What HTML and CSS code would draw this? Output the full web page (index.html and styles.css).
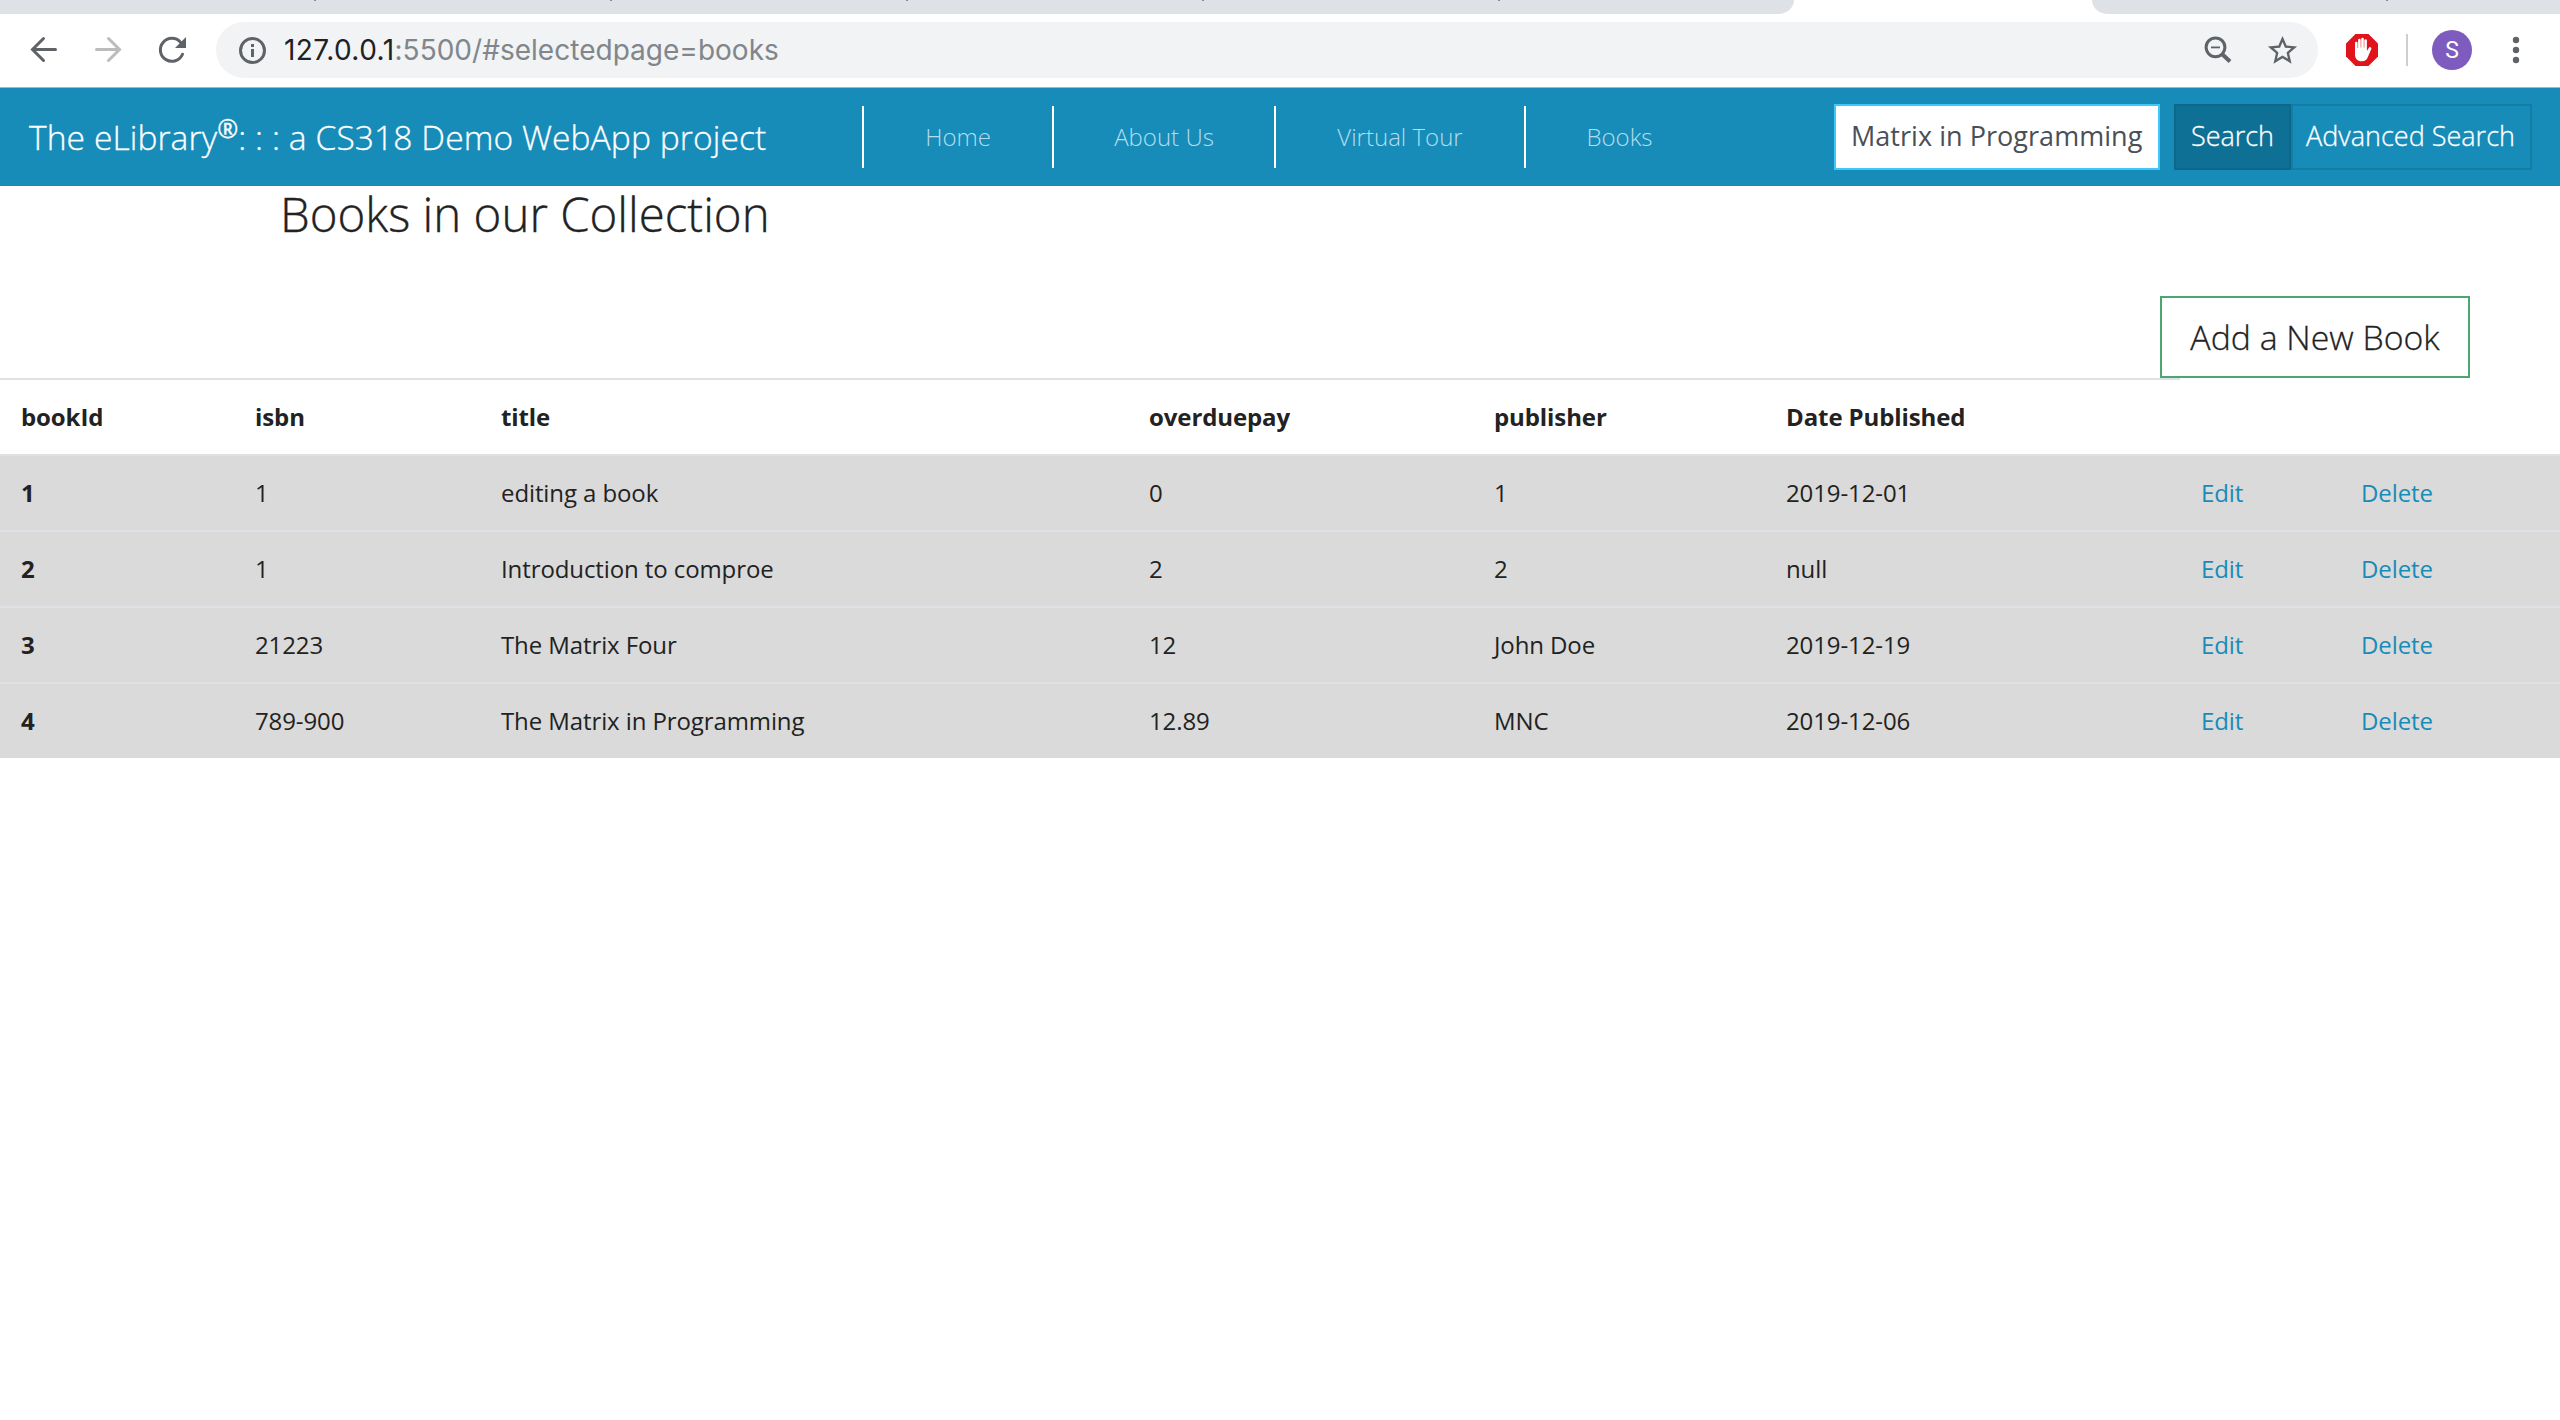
FILE: index.html
```html
<!DOCTYPE html>
<html lang="en">
<head>
<meta charset="utf-8">
<title>The eLibrary</title>
<link rel="stylesheet" href="styles.css">
</head>
<body>
<div class="tabstrip">
  <div class="tabs-before"><i class="tick"></i><i class="tick"></i><i class="tick"></i><i class="tick"></i><i class="tick"></i></div>
  <div class="tabs-after"><i class="tick"></i></div>
</div>
<div class="toolbar">
  <div class="nav-buttons">
    <svg class="icon" viewBox="28 34 32 32"><path d="M55.500 49.500H33M43.500 38.500L32.500 49.500L43.500 60.500" /></svg>
    <svg class="icon icon-disabled" viewBox="92 34 32 32"><path d="M96.500 49.500H119M108.500 38.500L119.500 49.500L108.500 60.500" /></svg>
    <svg class="icon" viewBox="156 34 32 32"><path d="M182.500 54.200A11.500 11.500 0 1 1 180.500 42.200" /><path class="solid" d="M186 37V48H175Z" /></svg>
  </div>
  <div class="omnibox">
    <svg class="icon" viewBox="236 34 32 32"><circle cx="252.500" cy="50.500" r="12" /><path class="solid" d="M251 44h3v3h-3zM251 49h3v8h-3z" /></svg>
    <div class="url"><span class="host">127.0.0.1</span>:5500/#selectedpage=books</div>
    <svg class="icon" viewBox="2200 34 32 32"><circle cx="2215.500" cy="47.300" r="9.400" /><path class="thin" d="M2211 47.400h9" /><path class="thick" d="M2222 54L2230 61.500" /></svg>
    <svg class="star" viewBox="0 0 24 24"><path d="M22 9.240l-7.190-.62L12 2 9.190 8.630 2 9.240l5.460 4.730L5.820 21 12 17.270 18.180 21l-1.630-7.030L22 9.240zM12 15.400l-3.760 2.270 1-4.280-3.320-2.880 4.380-.38L12 6.100l1.710 4.040 4.380.38-3.320 2.880 1 4.280L12 15.400z" /></svg>
  </div>
  <svg class="blocker" viewBox="0 0 32 32"><path class="octagon" d="M9.500 0H22.500L32 9.500V22.500L22.500 32H9.500L0 22.500V9.500Z" /><path class="hand" d="M9 9a1.300 1.300 0 0 1 2.600 0V14h.5V6a1.300 1.300 0 0 1 2.600 0V13.500h.5V5a1.300 1.300 0 0 1 2.600 0V13.500h.5V6.500a1.300 1.300 0 0 1 2.600 0V17l2-3.200a1.350 1.350 0 0 1 2.500 1L22.300 22c-1 3.300-3 5.300-6.600 5.300C11.500 27.300 9 24.500 9 20.500Z" /></svg>
  <div class="divider"></div>
  <div class="avatar">S</div>
  <svg class="dots" viewBox="0 0 8 32"><circle cx="4" cy="6" r="3.200" /><circle cx="4" cy="16" r="3.200" /><circle cx="4" cy="26" r="3.200" /></svg>
</div>
<header class="navbar">
  <a class="brand">The eLibrary<sup>®</sup>: : : a CS318 Demo WebApp project</a>
  <nav class="links"><a>Home</a><a>About Us</a><a>Virtual Tour</a><a>Books</a></nav>
  <div class="search">
    <div class="search-input">Matrix in Programming</div>
    <div class="btn btn-search">Search</div>
    <div class="btn btn-advanced">Advanced Search</div>
  </div>
</header>
<main>
  <h1>Books in our Collection</h1>
  <div class="actions"><a class="add-book">Add a New Book</a></div>
  <table>
    <colgroup><col class="c-id"><col class="c-isbn"><col class="c-title"><col class="c-pay"><col class="c-pub"><col class="c-date"><col class="c-edit"><col class="c-del"></colgroup>
    <thead><tr><th>bookId</th><th>isbn</th><th>title</th><th>overduepay</th><th>publisher</th><th>Date Published</th></tr></thead>
    <tbody>
      <tr><th>1</th><td>1</td><td>editing a book</td><td>0</td><td>1</td><td>2019-12-01</td><td><a>Edit</a></td><td><a>Delete</a></td></tr>
      <tr><th>2</th><td>1</td><td>Introduction to comproe</td><td>2</td><td>2</td><td>null</td><td><a>Edit</a></td><td><a>Delete</a></td></tr>
      <tr><th>3</th><td>21223</td><td>The Matrix Four</td><td>12</td><td>John Doe</td><td>2019-12-19</td><td><a>Edit</a></td><td><a>Delete</a></td></tr>
      <tr><th>4</th><td>789-900</td><td>The Matrix in Programming</td><td>12.89</td><td>MNC</td><td>2019-12-06</td><td><a>Edit</a></td><td><a>Delete</a></td></tr>
    </tbody>
  </table>
</main>
</body>
</html>
```
FILE: styles.css
```css
* { box-sizing: border-box; }
body { margin: 0; width: 2560px; height: 1420px; overflow: hidden; background: #fff; color: #222; font: 24px/36px "Open Sans", sans-serif; }

.tabstrip { display: flex; justify-content: space-between; height: 14px; }
.tabs-before, .tabs-after { display: flex; background: #dee1e6; height: 14px; }
.tabs-before { width: 1794px; border-bottom-right-radius: 16px 14px; padding-left: 314px; gap: 294px; }
.tabs-after { width: 468px; border-bottom-left-radius: 16px 14px; padding-left: 294px; }
.tick { width: 2px; height: 1px; background: #85888c; }

.toolbar { display: flex; align-items: center; height: 74px; padding: 0 0 1px 28px; border-bottom: 1px solid #b3b4b6; }
.nav-buttons { display: flex; gap: 32px; margin-right: 28px; }
.icon { width: 32px; height: 32px; flex: none; fill: none; stroke: #5f6368; stroke-width: 3; stroke-linecap: round; }
.icon-disabled { stroke: #babcbe; }
.icon .solid { fill: #5f6368; stroke: none; }
.icon .thin { stroke-width: 1.8; stroke-linecap: butt; }
.icon .thick { stroke-width: 4; stroke-linecap: butt; }
.omnibox { display: flex; align-items: center; width: 2102px; height: 56px; padding: 0 18px 0 20px; border-radius: 28px; background: #f1f3f4; }
.url { flex: 1; margin-left: 16px; font: 28px/40px Inter, sans-serif; letter-spacing: 0.02px; color: #80868b; }
.host { color: #202124; letter-spacing: 0.45px; }
.star { width: 35px; height: 35px; margin-left: 33px; fill: #5f6368; }
.blocker { width: 32px; height: 32px; margin-left: 28px; }
.octagon { fill: #e1131b; }
.hand { fill: #fff; }
.divider { width: 2px; height: 32px; margin: 0 24px 0 28px; background: #cfcfcf; }
.avatar { width: 40px; height: 40px; border-radius: 50%; background: #7e5bbe; color: #fff; font: 23px/42px Roboto, sans-serif; text-align: center; }
.dots { width: 8px; height: 32px; margin-left: 40px; fill: #5f6368; }

.navbar { display: flex; align-items: center; height: 98px; padding: 0 28px 0 29px; background: #178cb9; color: #fff; }
.brand { width: 833px; font-size: 33.6px; line-height: 50px; font-weight: 300; letter-spacing: 0.08px; white-space: nowrap; -webkit-text-stroke: 0.3px; }
.brand sup { font-size: 75%; font-weight: 400; line-height: 0; position: relative; top: -0.49em; vertical-align: baseline; }
.links { display: grid; grid-template-columns: 190px 222px 250px 189px; font-weight: 300; }
.links a { height: 62px; border-left: 2px solid #fff; line-height: 62px; text-align: center; color: #b3ddec; }
.search { display: flex; margin-left: auto; font-size: 27px; line-height: 60px; }
.search-input { width: 326px; height: 66px; margin-right: 14px; padding-left: 15px; border: 2px solid #3fc8f9; background: #fff; color: #495057; letter-spacing: 0.04px; white-space: nowrap; }
.btn { height: 66px; border: 2px solid #0d6889; text-align: center; font-weight: 300; white-space: nowrap; -webkit-text-stroke: 0.3px; }
.btn-search { width: 117px; background: #0f7095; }
.btn-advanced { width: 241px; padding-right: 2px; border-color: #137da5; }

h1 { margin: 0 0 0 280px; padding-bottom: 54px; font-size: 47.400px; line-height: 56px; font-weight: 300; -webkit-text-stroke: 0.35px; }
.actions { display: flex; justify-content: flex-end; padding-right: 90px; }
.add-book { width: 310px; height: 82px; border: 2px solid #4ca66f; font-size: 33.800px; line-height: 78px; font-weight: 300; text-align: center; -webkit-text-stroke: 0.3px; }

table { width: 2560px; table-layout: fixed; border-collapse: separate; border-spacing: 0; letter-spacing: -0.1px; }
th, td { height: 76px; padding: 0 0 0 21px; border-top: 2px solid #dee2e6; text-align: left; white-space: nowrap; }
tbody tr { background: #dadada; }
td a { color: #178cb9; }
.c-id { width: 234px; }
.c-isbn { width: 246px; }
.c-title { width: 648px; }
.c-pay { width: 345px; }
.c-pub { width: 292px; }
.c-date { width: 415px; }
.c-edit { width: 160px; }
.c-del { width: 220px; }
```
